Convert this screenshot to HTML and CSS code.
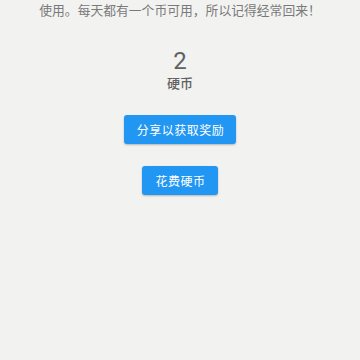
FILE: index.html
```html
<!DOCTYPE html>
<html lang="zh">
<head>
<meta charset="utf-8">
<link rel="stylesheet" href="styles.css">
</head>
<body>
<div class="page">
  <p class="intro">使用。每天都有一个币可用，所以记得经常回来！</p>
  <div class="balance">
    <div class="amount">2</div>
    <div class="unit">硬币</div>
  </div>
  <div class="actions">
    <button class="btn">分享以获取奖励</button>
    <button class="btn">花费硬币</button>
  </div>
</div>
</body>
</html>
```
FILE: styles.css
```css
html, body {
  margin: 0;
  padding: 0;
  background: #f2f2f1;
  font-family: Roboto, "Noto Sans CJK SC", sans-serif;
}
.page {
  width: 360px;
  height: 360px;
  display: flex;
  flex-direction: column;
  align-items: center;
}
.intro {
  margin: 0;
  font-size: 12.8px;
  line-height: 21px;
  color: #7a7a7a;
  text-align: center;
}
.balance {
  margin-top: 26px;
  display: flex;
  flex-direction: column;
  align-items: center;
}
.amount {
  font-size: 24px;
  line-height: 28px;
  color: #616161;
}
.unit {
  font-size: 13px;
  line-height: 18px;
  color: #616161;
  font-weight: 500;
}
.actions {
  margin-top: 22px;
  display: flex;
  flex-direction: column;
  align-items: center;
  gap: 22px;
}
.btn {
  height: 29px;
  padding: 0 12px 0 13px;
  border: none;
  border-radius: 3px;
  background: #2196f3;
  color: #fff;
  font-family: Roboto, "Noto Sans CJK SC", sans-serif;
  font-size: 12px;
  letter-spacing: 0.5px;
  box-shadow: 0 1px 2px rgba(0,0,0,0.25);
}
```
